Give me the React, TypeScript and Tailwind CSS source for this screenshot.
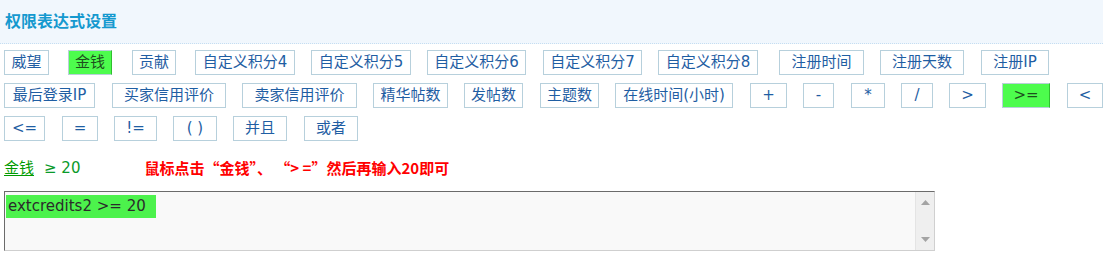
import React from 'react'

const FONT = '"DejaVu Sans", "Noto Sans CJK SC", sans-serif'
const CJK_FIRST = '"Noto Sans CJK SC", "DejaVu Sans", sans-serif'

type Btn = { label: string; w: number; ml: number; active?: boolean }

const rows: Btn[][] = [
  [
    { label: '威望', w: 45, ml: 4 },
    { label: '金钱', w: 44, ml: 19, active: true },
    { label: '贡献', w: 44, ml: 20 },
    { label: '自定义积分4', w: 100, ml: 19 },
    { label: '自定义积分5', w: 100, ml: 16 },
    { label: '自定义积分6', w: 99, ml: 16 },
    { label: '自定义积分7', w: 99, ml: 17 },
    { label: '自定义积分8', w: 100, ml: 16 },
    { label: '注册时间', w: 85, ml: 21 },
    { label: '注册天数', w: 84, ml: 16 },
    { label: '注册IP', w: 68, ml: 17 },
  ],
  [
    { label: '最后登录IP', w: 91, ml: 4 },
    { label: '买家信用评价', w: 114, ml: 17 },
    { label: '卖家信用评价', w: 115, ml: 16 },
    { label: '精华帖数', w: 75, ml: 16 },
    { label: '发帖数', w: 59, ml: 16 },
    { label: '主题数', w: 59, ml: 17 },
    { label: '在线时间(小时)', w: 118, ml: 16 },
    { label: '+', w: 37, ml: 17 },
    { label: '-', w: 31, ml: 16 },
    { label: '*', w: 34, ml: 17 },
    { label: '/', w: 32, ml: 16 },
    { label: '>', w: 37, ml: 16 },
    { label: '>=', w: 48, ml: 16, active: true },
    { label: '<', w: 36, ml: 17 },
  ],
  [
    { label: '<=', w: 41, ml: 4 },
    { label: '=', w: 36, ml: 17 },
    { label: '!=', w: 43, ml: 16 },
    { label: '( )', w: 44, ml: 16 },
    { label: '并且', w: 54, ml: 16 },
    { label: '或者', w: 54, ml: 17 },
  ],
]

function ExprButton({ btn }: { btn: Btn }) {
  const base = 'flex h-[25px] shrink-0 items-center justify-center border text-[15px] leading-none whitespace-pre'
  const look = btn.active
    ? 'border-[#b9cfd9] border-r-[#2fbf2f] bg-[#4dfc4d] text-[#1d4f1d]'
    : 'border-[#b7d0dc] bg-white text-[#1f5ea3]'
  return (
    <span className={`${base} ${look}`} style={{ width: btn.w, marginLeft: btn.ml }}>
      {btn.label}
    </span>
  )
}

export default function App() {
  return (
    <div className="h-[253px] w-[1103px] overflow-hidden bg-white" style={{ fontFamily: FONT }}>
      {/* Header */}
      <div className="flex h-[44px] items-center border-b border-dotted border-[#c5def2] bg-[#f1f7fd] pl-[5px]">
        <span className="text-[16px] font-bold text-[#1599cf]">权限表达式设置</span>
      </div>

      {/* Buttons */}
      <div className="mt-[6px] flex flex-col gap-[8px]">
        {rows.map((row, i) => (
          <div key={i} className="flex">
            {row.map((b) => (
              <ExprButton key={b.label} btn={b} />
            ))}
          </div>
        ))}
      </div>

      {/* Preview */}
      <div className="mt-[18px] flex h-[18px] items-center pl-[4px] text-[15px]">
        <span className="text-[#009a00] underline underline-offset-2">金钱</span>
        <span className="ml-[10px] text-[#0a9a2a]">≥ 20</span>
        <span className="ml-[64px] font-bold text-[#ff0000]" style={{ fontFamily: CJK_FIRST }}>
          鼠标点击“金钱”、 “&gt; =”然后再输入20即可
        </span>
      </div>

      {/* Textarea */}
      <div className="ml-[4px] mt-[14px] flex h-[60px] w-[931px] border border-t-[#6b6b6b] border-l-[#6b6b6b] border-r-[#d0d0d0] border-b-[#cfcfcf] bg-[#f9f9f9]">
        <div className="flex-1 p-[1px] pt-[2px]">
          <span className="inline-block h-[23px] bg-[#4cf24c] pl-[2px] pr-[10px] text-[15px] leading-[23px] text-[#2b2b2b]">
            extcredits2 &gt;= 20
          </span>
        </div>
        <div className="flex w-[19px] flex-col items-center justify-between border-l border-[#e4e4e4] bg-[#efefef] py-[8px]">
          <svg width="9" height="5" viewBox="0 0 9 5">
            <path d="M0 5 L4.5 0 L9 5 Z" fill="#a3a3a3" />
          </svg>
          <svg width="9" height="5" viewBox="0 0 9 5">
            <path d="M0 0 L4.5 5 L9 0 Z" fill="#a3a3a3" />
          </svg>
        </div>
      </div>
    </div>
  )
}
